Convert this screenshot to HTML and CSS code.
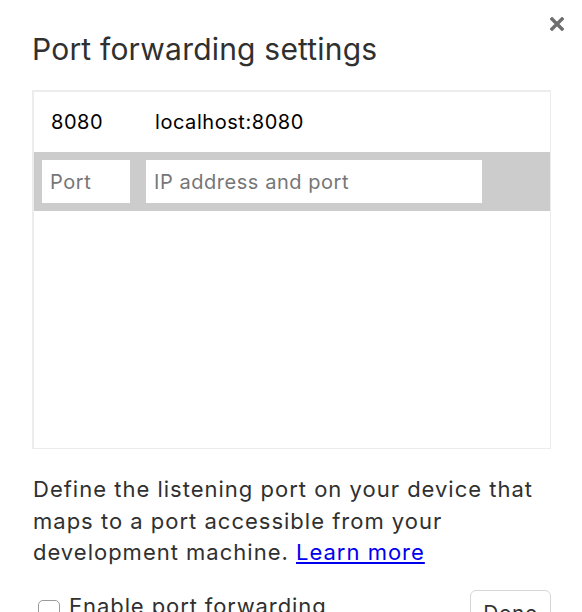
FILE: index.html
```html
<!DOCTYPE html>
<html>
<head>
<meta charset="utf-8">
<link rel="stylesheet" href="styles.css">
</head>
<body>
<div class="dialog">
  <button class="close" aria-label="Close">
    <svg width="14" height="14" viewBox="0 0 14 14"><path d="M2 2 L12 12 M12 2 L2 12" stroke="#6e6e6e" stroke-width="3.4" stroke-linecap="square"/></svg>
  </button>
  <h1 class="title">Port forwarding settings</h1>
  <div class="list">
    <div class="row">
      <span class="port">8080</span>
      <span class="addr">localhost:8080</span>
    </div>
    <div class="row edit">
      <input class="in-port" type="text" placeholder="Port">
      <input class="in-addr" type="text" placeholder="IP address and port">
    </div>
  </div>
  <p class="desc">Define the listening port on your device that maps to a port accessible from your development machine. <a href="#">Learn more</a></p>
  <div class="footer">
    <label class="check"><span class="box"></span>Enable port forwarding</label>
    <button class="done">Done</button>
  </div>
</div>
</body>
</html>
```
FILE: styles.css
```css
html, body {
  margin: 0;
  padding: 0;
  background: #fff;
  overflow: hidden;
}
body {
  font-family: Inter, "Noto Sans", sans-serif;
  color: #333;
}
.dialog {
  position: relative;
  padding: 0 31px 0 32px;
  width: 519px;
}
.close {
  position: absolute;
  top: 17px;
  right: 18px;
  width: 14px;
  height: 14px;
  padding: 0;
  border: 0;
  background: none;
}
.close svg { display: block; }
.title {
  margin: 0;
  padding: 31px 0 0 0;
  height: 90px;
  box-sizing: border-box;
  font-size: 30px;
  font-weight: 400;
  line-height: 36px;
  color: #303030;
  letter-spacing: 0.2px;
}
.list {
  box-sizing: border-box;
  height: 359px;
  border: 2px solid #ececec;
  border-right-width: 1px;
  border-bottom-width: 1px;
}
.row {
  display: flex;
  align-items: center;
  height: 60px;
  font-size: 20px;
  letter-spacing: 0.55px;
  color: #000;
}
.row .port {
  width: 104px;
  padding-left: 17px;
}
.row.edit {
  height: 59px;
  background: #cccccc;
  padding: 0 8px;
  gap: 16px;
}
.row.edit input {
  box-sizing: border-box;
  height: 43px;
  border: 0;
  outline: none;
  background: #fff;
  font-family: Inter, "Noto Sans", sans-serif;
  font-size: 20px;
  letter-spacing: 0.55px;
  padding: 0 8px;
  color: #000;
}
.row.edit input::placeholder { color: #767676; }
.in-port { width: 88px; }
.in-addr { width: 336px; }
.desc {
  margin: 25px 0 0 1px;
  font-size: 22px;
  letter-spacing: 1px;
  line-height: 31.5px;
  color: #303030;
}
.desc a { color: #0000ee; }
.footer {
  display: flex;
  justify-content: space-between;
  align-items: flex-start;
  margin-top: 21px;
}
.check {
  display: flex;
  align-items: flex-start;
  gap: 9px;
  font-size: 22px;
  letter-spacing: 0.9px;
  color: #303030;
  padding: 3px 0 0 6px;
  line-height: 26px;
}
.box {
  width: 22px;
  height: 22px;
  box-sizing: border-box;
  border: 1px solid #9a9a9a;
  border-radius: 5px;
  background: #fff;
  margin-top: 7px;
}
.done {
  box-sizing: border-box;
  width: 81px;
  height: 42px;
  border: 1px solid #d6d6d6;
  border-radius: 6px;
  background: #fff;
  font-family: Inter, "Noto Sans", sans-serif;
  font-size: 21px;
  letter-spacing: 0.5px;
  color: #333;
  padding: 6px 0 0;
}
```
